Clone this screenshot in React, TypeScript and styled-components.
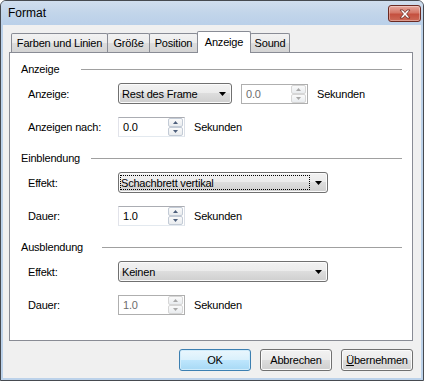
import React from "react"
import styled, { createGlobalStyle } from "styled-components"

const GlobalStyle = createGlobalStyle`
  html, body {
    margin: 0;
    padding: 0;
    background: #ffffff;
  }
  * {
    box-sizing: border-box;
  }
`

const Window = styled.div`
  width: 424px;
  height: 381px;
  display: flex;
  flex-direction: column;
  border: 1px solid #464a50;
  border-radius: 6px 6px 0 0;
  background: #bcd2ea;
  font-family: "Liberation Sans", Arial, sans-serif;
  font-size: 11px;
  letter-spacing: -0.2px;
  color: #000;
  overflow: hidden;
`

const TitleBar = styled.div`
  height: 24px;
  flex: none;
  display: flex;
  align-items: flex-start;
  padding: 0 2px 0 7px;
  background: linear-gradient(to bottom, #d0deee 0%, #c2d5ea 50%, #bad0e9 100%);
`

const Title = styled.div`
  flex: 1;
  font-size: 12px;
  line-height: 25px;
  letter-spacing: 0;
`

const CloseButton = styled.div`
  width: 33px;
  height: 17px;
  margin-top: 4px;
  display: flex;
  align-items: center;
  justify-content: center;
  border: 1px solid #6b2a22;
  border-radius: 3px;
  background: linear-gradient(to bottom, #e6a89e 0%, #d57767 45%, #c4503f 55%, #cd6a57 100%);
  box-shadow: inset 0 0 0 1px rgba(255, 255, 255, 0.35);
`

const Client = styled.div`
  flex: 1;
  margin: 0 2px 2px 2px;
  padding: 6px 8px 0 6px;
  display: flex;
  flex-direction: column;
  background: #f0f0f0;
`

const TabStrip = styled.div`
  height: 22px;
  margin-bottom: -1px;
  padding-left: 2px;
  display: flex;
  align-items: flex-end;
  position: relative;
  z-index: 1;
`

const Tab = styled.div<{ $w: number; $active?: boolean }>`
  width: ${p => p.$w}px;
  height: ${p => (p.$active ? 22 : 19)}px;
  margin-bottom: ${p => (p.$active ? 0 : 1)}px;
  margin-left: -1px;
  padding-bottom: ${p => (p.$active ? 2 : 0)}px;
  display: flex;
  align-items: center;
  justify-content: center;
  border: 1px solid #898c95;
  border-bottom: none;
  border-radius: 2px 2px 0 0;
  background: ${p =>
    p.$active
      ? "#ffffff"
      : "linear-gradient(to bottom, #f2f2f2 0%, #ebebeb 50%, #dddddd 50%, #d4d4d4 100%)"};
  position: relative;
  z-index: ${p => (p.$active ? 2 : 1)};

  &:first-child {
    margin-left: 0;
  }
`

const Panel = styled.div`
  height: 289px;
  flex: none;
  padding: 8px 10px 0 11px;
  display: flex;
  flex-direction: column;
  gap: 13px;
  border: 1px solid #898c95;
  background: #ffffff;
`

const Group = styled.div`
  display: flex;
  flex-direction: column;
`

const GroupHeader = styled.div`
  height: 16px;
  display: flex;
  align-items: center;
`

const GroupLabel = styled.div<{ $w: number }>`
  width: ${p => p.$w}px;
  flex: none;
`

const GroupLine = styled.div`
  flex: 1;
  height: 1px;
  background: #a0a0a0;
`

const Rows = styled.div`
  padding-top: 6px;
  display: flex;
  flex-direction: column;
  gap: 12px;
`

const Row = styled.div`
  height: 21px;
  padding-left: 7px;
  display: flex;
  align-items: center;
  gap: 9px;
`

const FieldLabel = styled.div`
  width: 81px;
  flex: none;
`

const Combo = styled.div<{ $w: number }>`
  width: ${p => p.$w}px;
  height: 21px;
  flex: none;
  display: flex;
  align-items: stretch;
  border: 1px solid #707070;
  border-radius: 3px;
  background: linear-gradient(to bottom, #f2f2f2 0%, #ebebeb 50%, #dddddd 50%, #cfcfcf 100%);
  box-shadow: inset 0 0 0 1px #fbfbfb;
`

const ComboValue = styled.div<{ $focused?: boolean }>`
  flex: 1;
  display: flex;
  align-items: center;
  margin: 2px 0 2px 1px;
  padding-left: ${p => (p.$focused ? 0 : 1)}px;
  border: 1px dotted ${p => (p.$focused ? "#000000" : "transparent")};
`

const ComboArrow = styled.div`
  width: 17px;
  flex: none;
  display: flex;
  align-items: center;
  justify-content: center;
`

const Spin = styled.div<{ $w: number; $disabled?: boolean }>`
  width: ${p => p.$w}px;
  height: 20px;
  flex: none;
  display: flex;
  border: 1px solid;
  border-color: ${p => (p.$disabled ? "#afafaf" : "#abadb3 #dbdfe6 #e3e9ef #e2e3ea")};
  background: #ffffff;
  color: ${p => (p.$disabled ? "#6d6d6d" : "#000000")};
`

const SpinValue = styled.div`
  flex: 1;
  display: flex;
  align-items: center;
  padding-left: 4px;
`

const SpinButtons = styled.div`
  width: 16px;
  flex: none;
  display: flex;
  flex-direction: column;
  padding: 0 1px 0 0;
`

const SpinButton = styled.div<{ $disabled?: boolean }>`
  flex: 1;
  display: flex;
  align-items: center;
  justify-content: center;
  border: 1px solid ${p => (p.$disabled ? "#d6d6d6" : "#c3cbd6")};
  border-radius: 2px;
  background: linear-gradient(to bottom, #fafafa 0%, #e9ecef 100%);
`

const Units = styled.div`
  flex: none;
`

const ButtonBar = styled.div`
  margin-top: 8px;
  display: flex;
  justify-content: flex-end;
  gap: 9px;
`

const Button = styled.div<{ $default?: boolean }>`
  width: 72px;
  height: 22px;
  display: flex;
  align-items: center;
  justify-content: center;
  border: 1px solid ${p => (p.$default ? "#3c7fb1" : "#707070")};
  border-radius: 3px;
  background: ${p =>
    p.$default
      ? "linear-gradient(to bottom, #eaf6fd 0%, #d9f0fc 50%, #bee6fd 50%, #a7d9f5 100%)"
      : "linear-gradient(to bottom, #f2f2f2 0%, #ebebeb 50%, #dddddd 50%, #cfcfcf 100%)"};
  box-shadow: inset 0 0 0 1px ${p => (p.$default ? "#d0ecfb" : "#fbfbfb")};
`

function DownArrow() {
  return (
    <svg width="7" height="4" viewBox="0 0 7 4">
      <polygon points="0,0 7,0 3.5,4" fill="#000" />
    </svg>
  )
}

function SpinArrow({ up, disabled }: { up?: boolean; disabled?: boolean }) {
  const color = disabled ? "#a8a8a8" : "#4d5f7c"
  return (
    <svg width="5" height="3" viewBox="0 0 5 3">
      <polygon points={up ? "0,3 5,3 2.5,0" : "0,0 5,0 2.5,3"} fill={color} />
    </svg>
  )
}

function CloseGlyph() {
  return (
    <svg width="12" height="10" viewBox="0 0 12 10">
      <path
        d="M1 1 L4 1 L6 3.5 L8 1 L11 1 L7.6 5 L11 9 L8 9 L6 6.5 L4 9 L1 9 L4.4 5 Z"
        fill="#ffffff"
        stroke="#6a2b24"
        strokeWidth="0.8"
        strokeLinejoin="round"
      />
    </svg>
  )
}

function ComboBox({ w, value, focused }: { w: number; value: string; focused?: boolean }) {
  return (
    <Combo $w={w}>
      <ComboValue $focused={focused}>{value}</ComboValue>
      <ComboArrow>
        <DownArrow />
      </ComboArrow>
    </Combo>
  )
}

function SpinBox({ w, value, disabled }: { w: number; value: string; disabled?: boolean }) {
  return (
    <Spin $w={w} $disabled={disabled}>
      <SpinValue>{value}</SpinValue>
      <SpinButtons>
        <SpinButton $disabled={disabled}>
          <SpinArrow up disabled={disabled} />
        </SpinButton>
        <SpinButton $disabled={disabled}>
          <SpinArrow disabled={disabled} />
        </SpinButton>
      </SpinButtons>
    </Spin>
  )
}

const tabs = [
  { label: "Farben und Linien", w: 97 },
  { label: "Größe", w: 43 },
  { label: "Position", w: 49 },
  { label: "Anzeige", w: 54, active: true },
  { label: "Sound", w: 40 },
]

export default function App() {
  return (
    <>
      <GlobalStyle />
      <Window>
        <TitleBar>
          <Title>Format</Title>
          <CloseButton>
            <CloseGlyph />
          </CloseButton>
        </TitleBar>
        <Client>
          <TabStrip>
            {tabs.map(t => (
              <Tab key={t.label} $w={t.w} $active={t.active}>
                {t.label}
              </Tab>
            ))}
          </TabStrip>
          <Panel>
            <Group>
              <GroupHeader>
                <GroupLabel $w={60}>Anzeige</GroupLabel>
                <GroupLine />
              </GroupHeader>
              <Rows>
                <Row>
                  <FieldLabel>Anzeige:</FieldLabel>
                  <ComboBox w={114} value="Rest des Frame" />
                  <SpinBox w={67} value="0.0" disabled />
                  <Units>Sekunden</Units>
                </Row>
                <Row>
                  <FieldLabel>Anzeigen nach:</FieldLabel>
                  <SpinBox w={67} value="0.0" />
                  <Units>Sekunden</Units>
                </Row>
              </Rows>
            </Group>
            <Group>
              <GroupHeader>
                <GroupLabel $w={70}>Einblendung</GroupLabel>
                <GroupLine />
              </GroupHeader>
              <Rows>
                <Row>
                  <FieldLabel>Effekt:</FieldLabel>
                  <ComboBox w={210} value="Schachbrett vertikal" focused />
                </Row>
                <Row>
                  <FieldLabel>Dauer:</FieldLabel>
                  <SpinBox w={67} value="1.0" />
                  <Units>Sekunden</Units>
                </Row>
              </Rows>
            </Group>
            <Group>
              <GroupHeader>
                <GroupLabel $w={81}>Ausblendung</GroupLabel>
                <GroupLine />
              </GroupHeader>
              <Rows>
                <Row>
                  <FieldLabel>Effekt:</FieldLabel>
                  <ComboBox w={210} value="Keinen" />
                </Row>
                <Row>
                  <FieldLabel>Dauer:</FieldLabel>
                  <SpinBox w={67} value="1.0" disabled />
                  <Units>Sekunden</Units>
                </Row>
              </Rows>
            </Group>
          </Panel>
          <ButtonBar>
            <Button $default>OK</Button>
            <Button>Abbrechen</Button>
            <Button>
              <span>
                <u>Ü</u>bernehmen
              </span>
            </Button>
          </ButtonBar>
        </Client>
      </Window>
    </>
  )
}
